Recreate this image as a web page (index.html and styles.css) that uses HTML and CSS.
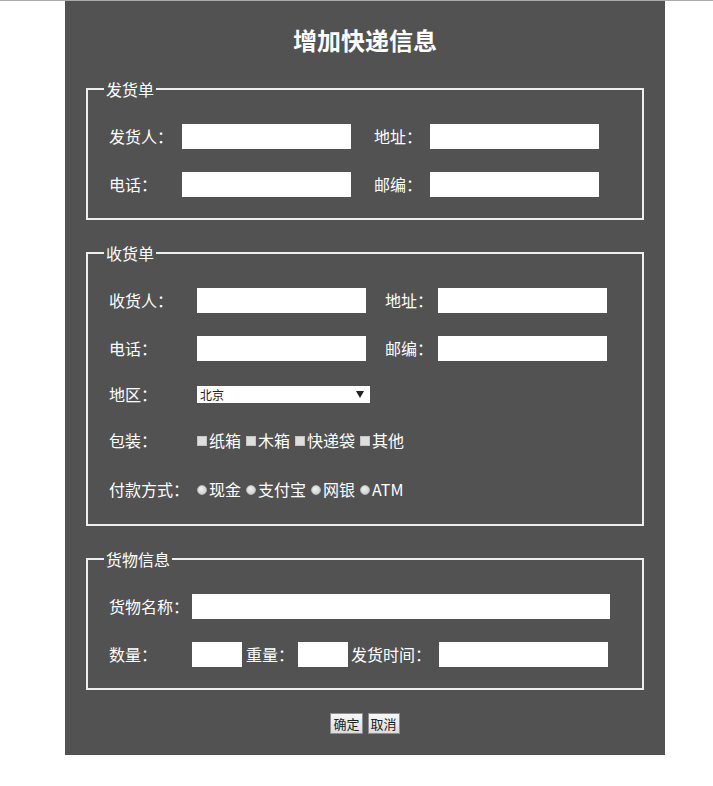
FILE: index.html
```html
<!DOCTYPE html>
<html lang="zh-CN">
<head>
    <meta charset="UTF-8">
    <meta name="viewport" content="width=device-width, initial-scale=1.0">
    <title>增加快递信息</title>
    <link rel="stylesheet" href="styles.css">
</head>
<body>

    <div class="box">
        <h2>增加快递信息</h2>

        <form>
            <fieldset class="send">
                <legend>发货单</legend>
                <div class="row">
                    <label class="lbl">发货人：</label><input type="text">
                    <label class="lbl2">地址：</label><input type="text">
                </div>
                <div class="row">
                    <label class="lbl">电话：</label><input type="text">
                    <label class="lbl2">邮编：</label><input type="text">
                </div>
            </fieldset>

            <fieldset class="recv">
                <legend>收货单</legend>
                <div class="row">
                    <label class="lbl">收货人：</label><input type="text">
                    <label class="lbl2">地址：</label><input type="text">
                </div>
                <div class="row">
                    <label class="lbl">电话：</label><input type="text">
                    <label class="lbl2">邮编：</label><input type="text">
                </div>
                <div class="row row-select">
                    <label class="lbl">地区：</label>
                    <span class="select-wrap">
                        <select>
                            <option>北京</option>
                            <option>上海</option>
                            <option>广州</option>
                            <option>深圳</option>
                        </select>
                    </span>
                </div>
                <div class="row row-check">
                    <label class="lbl">包装：</label>
                    <label class="opt"><input type="checkbox">纸箱</label>
                    <label class="opt"><input type="checkbox">木箱</label>
                    <label class="opt"><input type="checkbox">快递袋</label>
                    <label class="opt"><input type="checkbox">其他</label>
                </div>
                <div class="row row-radio">
                    <label class="lbl">付款方式：</label>
                    <label class="opt"><input type="radio" name="pay">现金</label>
                    <label class="opt"><input type="radio" name="pay">支付宝</label>
                    <label class="opt"><input type="radio" name="pay">网银</label>
                    <label class="opt"><input type="radio" name="pay">ATM</label>
                </div>
            </fieldset>

            <fieldset class="goods">
                <legend>货物信息</legend>
                <div class="row">
                    <label class="lbl">货物名称：</label><input type="text" class="long">
                </div>
                <div class="row">
                    <label class="lbl">数量：</label><input type="text" class="short">
                    <label class="lbl-w">重量：</label><input type="text" class="short">
                    <label class="lbl-t">发货时间：</label><input type="text">
                </div>
            </fieldset>

            <div class="buttons">
                <button type="submit" class="ok-btn">确定</button>
                <button type="reset" class="cancel-btn">取消</button>
            </div>
        </form>
    </div>

</body>
</html>
```

FILE: styles.css
```css
body {
    margin: 0;
    border-top: 1px solid #ababab;
    background: #fff;
    font-family: "Microsoft YaHei", "Noto Sans CJK SC", sans-serif;
}
.box {
    width: 600px;
    margin-left: 65px;
    padding: 21px 0 21px;
    background: #525252;
    color: #fff;
}
h2 {
    margin: 0;
    font-size: 24px;
    line-height: 36px;
    font-weight: bold;
    text-align: center;
}
fieldset {
    margin: 22px 21px 0;
    padding: 24px 21px 21px;
    border: 2px solid #eee;
    min-width: 0;
}
fieldset.send { margin-top: 20px; }
fieldset.recv { padding-bottom: 22px; }
legend {
    margin-left: -5px;
    padding: 0 2px;
    font-size: 16px;
    line-height: 22px;
}
.row {
    display: flex;
    align-items: center;
    height: 25px;
    margin-top: 23px;
    font-size: 16px;
    white-space: nowrap;
}
.row:first-of-type { margin-top: 0; }
.row-select { margin-top: 21px; }
.row-check { margin-top: 21px; }
.row-radio { margin-top: 24px; }
.lbl, .lbl2, .lbl-w, .lbl-t {
    line-height: 25px;
    flex-shrink: 0;
}
input[type="text"] {
    width: 169px;
    height: 25px;
    padding: 0 3px;
    border: none;
    box-sizing: border-box;
    background: #fff;
    outline: none;
    flex-shrink: 0;
}
input.long { width: 418px; }
input.short { width: 50px; }

.send .lbl { width: 73px; }
.send .lbl2 { width: 56px; margin-left: 23px; }
.recv .lbl { width: 88px; }
.recv .lbl2 { width: 53px; margin-left: 19px; }
.goods .lbl { width: 83px; }
.lbl-w { width: 52px; margin-left: 4px; }
.lbl-t { width: 88px; margin-left: 3px; }

.select-wrap {
    position: relative;
    display: flex;
    height: 17px;
}
.select-wrap::after {
    content: "";
    position: absolute;
    right: 6px;
    top: 5px;
    border-left: 4px solid transparent;
    border-right: 4px solid transparent;
    border-top: 7px solid #222;
    pointer-events: none;
}
select {
    -webkit-appearance: none;
    appearance: none;
    display: block;
    width: 173px;
    height: 17px;
    margin: 0;
    padding: 0 0 0 3px;
    border: none;
    border-radius: 0;
    background: #fff;
    color: #222;
    font-family: inherit;
    font-size: 12px;
    line-height: 17px;
    outline: none;
}

.opt {
    display: inline-flex;
    align-items: center;
    margin-right: 5px;
    line-height: 25px;
}
.opt input {
    -webkit-appearance: none;
    appearance: none;
    width: 10px;
    height: 10px;
    margin: 1px 2px 0 0;
    box-sizing: border-box;
}
.opt input[type="checkbox"] {
    border: 1px solid #c4c4c4;
    background: #dedede;
}
.opt input[type="radio"] {
    border-radius: 50%;
    border: 1px solid #b8b8b8;
    background: radial-gradient(circle at 40% 35%, #f0f0f0, #c8c8c8);
}

.buttons {
    display: flex;
    justify-content: center;
    gap: 5px;
    margin-top: 23px;
}
button {
    height: 21px;
    padding: 0 2px;
    border: 1px solid #8f8f8f;
    background: linear-gradient(#f7f7f7, #dcdcdc);
    color: #222;
    font-family: inherit;
    font-size: 13px;
    line-height: 19px;
    cursor: pointer;
}
button:hover { background: linear-gradient(#fff, #e6e6e6); }
```
